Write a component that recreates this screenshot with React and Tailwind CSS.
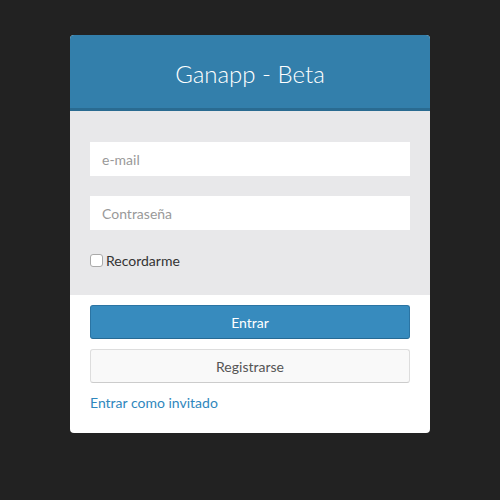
export default function App() {
  return (
    <div className="min-h-[500px] w-[500px] bg-[#222222] pt-[35px]" style={{ fontFamily: 'Lato, "Liberation Sans", sans-serif' }}>
      <div className="mx-auto w-[360px] overflow-hidden rounded-[4px] bg-white">
        <div className="flex h-[76px] items-center justify-center border-b-[3px] border-[#2a6b91] bg-[#337fab] pt-[4px]">
          <h1 className="text-[24px] font-light leading-none text-white">Ganapp - Beta</h1>
        </div>
        <div className="flex flex-col bg-[#e8e8ea] px-[20px] pt-[31px] pb-[25px]">
          <div className="flex h-[34px] items-center bg-white px-[12px] text-[14px] text-[#999]">e-mail</div>
          <div className="mt-[20px] flex h-[34px] items-center bg-white px-[12px] text-[14px] text-[#999]">Contraseña</div>
          <label className="mt-[20px] flex h-[20px] items-center gap-[3px] text-[14px] text-[#333]">
            <span className="h-[13px] w-[13px] rounded-[3px] border border-[#aaa] bg-white" />
            Recordarme
          </label>
        </div>
        <div className="flex flex-col px-[20px] pt-[10px] pb-[20px]">
          <button className="h-[34px] rounded-[3px] border border-[#2b74a3] border-b-[#266a94] bg-[#378bbe] text-[14px] text-white">Entrar</button>
          <button className="mt-[10px] h-[34px] rounded-[3px] border border-[#ddd] border-b-[#ccc] bg-[#f9f9f9] text-[14px] text-[#555]">Registrarse</button>
          <a className="mt-[10px] h-[20px] leading-[20px] text-[14px] text-[#2f87bd]">Entrar como invitado</a>
        </div>
      </div>
    </div>
  );
}
